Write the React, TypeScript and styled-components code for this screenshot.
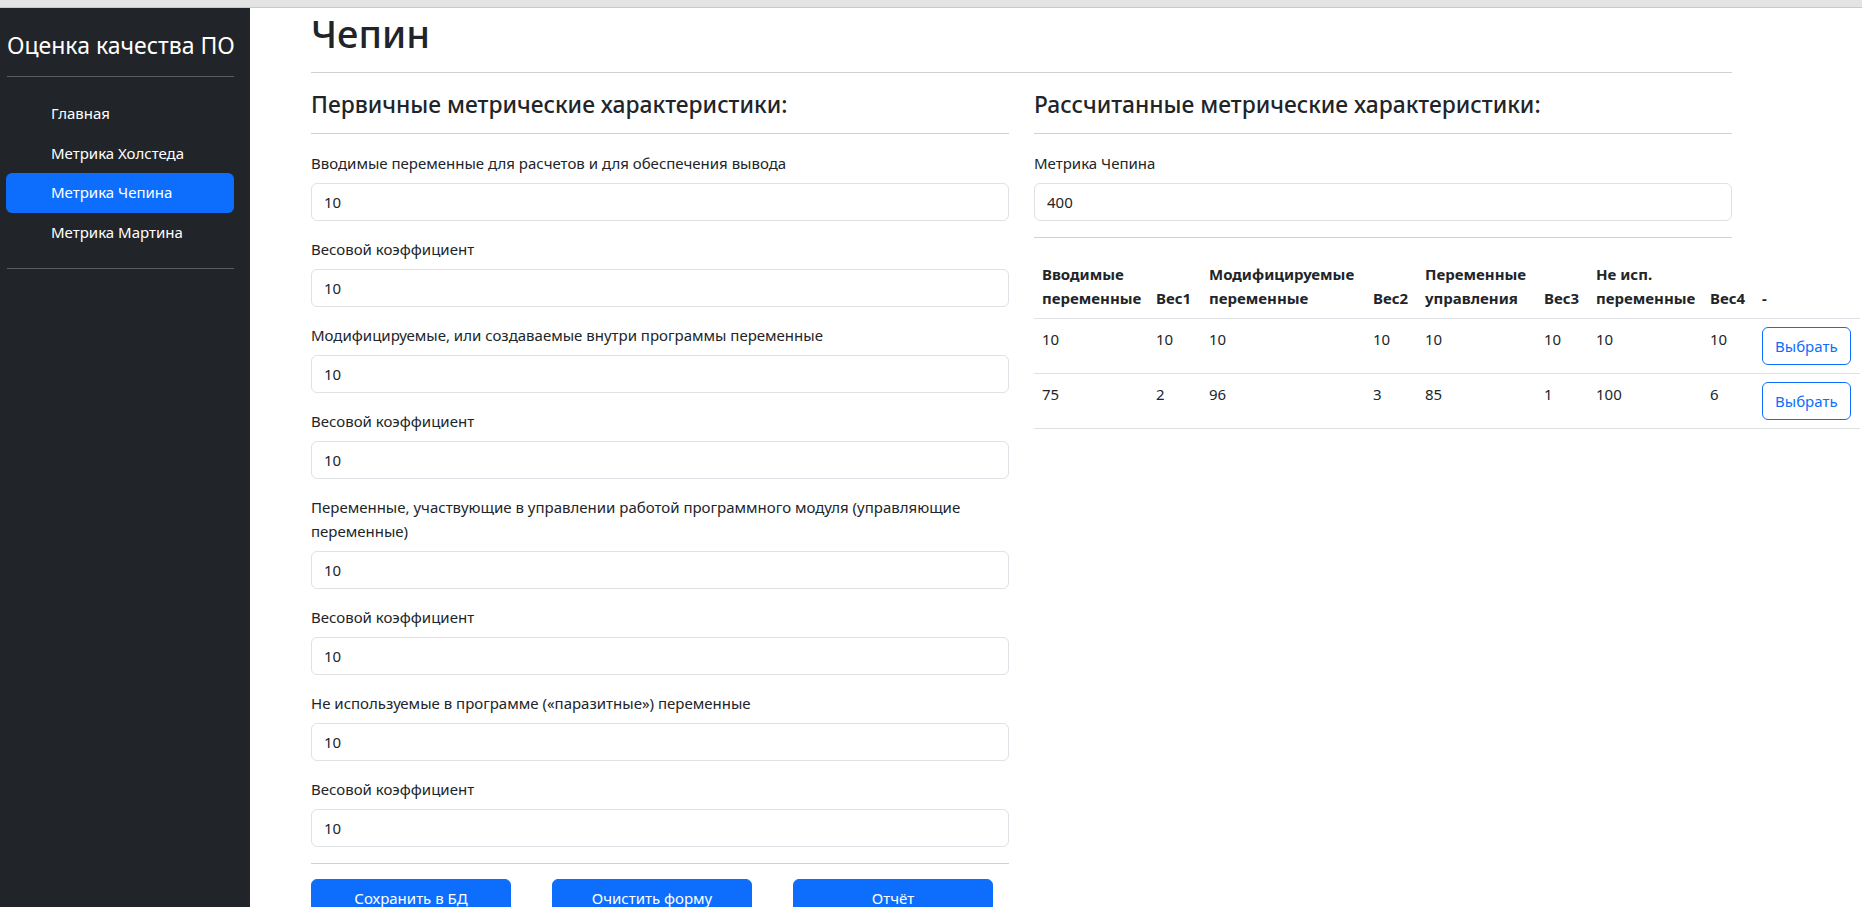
import React from "react";
import styled, { createGlobalStyle } from "styled-components";

const FONT = `"Noto Sans", "Open Sans", "Liberation Sans", sans-serif`;

const GlobalStyle = createGlobalStyle`
  html, body {
    margin: 0;
    padding: 0;
    overflow: hidden;
    background: #ffffff;
  }
  body {
    font-family: ${FONT};
    font-size: 15px;
    line-height: 24px;
    color: #212529;
  }
  * { box-sizing: border-box; }
`;

const Page = styled.div`
  width: 1862px;
  height: 907px;
  overflow: hidden;
  display: flex;
  flex-direction: column;
`;

const TopStrip = styled.div`
  height: 8px;
  flex: none;
  background: #e4e4e4;
  border-bottom: 1px solid #c9c9c9;
`;

const Body = styled.div`
  flex: 1;
  display: flex;
  min-height: 0;
`;

const Sidebar = styled.aside`
  width: 250px;
  flex: none;
  background: #212529;
  color: #ffffff;
  padding: 19px 16px 0 6px;
  display: flex;
  flex-direction: column;
`;

const Brand = styled.div`
  font-size: 23px;
  line-height: 36px;
  padding-left: 1px;
  white-space: nowrap;
`;

const SideRule = styled.div<{ $top: number; $bottom: number }>`
  height: 1px;
  background: #5a5d61;
  margin: ${(p) => p.$top}px 0 ${(p) => p.$bottom}px 1px;
`;

const NavList = styled.nav`
  display: flex;
  flex-direction: column;
`;

const NavLink = styled.a<{ $active?: boolean }>`
  display: block;
  height: 39.5px;
  line-height: 39.5px;
  padding-left: 45px;
  font-size: 15px;
  color: #ffffff;
  text-decoration: none;
  border-radius: 6px;
  background: ${(p) => (p.$active ? "#0d6efd" : "transparent")};
`;

const Main = styled.main`
  flex: 1;
  padding-left: 61px;
  min-width: 0;
`;

const Content = styled.div`
  width: 1421px;
`;

const Title = styled.h1`
  margin: 1px 0 0;
  font-size: 38px;
  line-height: 48px;
  font-weight: 500;
  color: #212529;
`;

const Rule = styled.div<{ $top: number; $bottom: number }>`
  height: 1px;
  background: #cfd2d4;
  width: 100%;
  margin: ${(p) => p.$top}px 0 ${(p) => p.$bottom}px;
`;

const Columns = styled.div`
  display: grid;
  grid-template-columns: 698px 698px;
  column-gap: 25px;
`;

const Column = styled.section`
  display: flex;
  flex-direction: column;
  min-width: 0;
`;

const SectionTitle = styled.h3`
  margin: 17px 0 0;
  font-size: 22.8px;
  line-height: 29px;
  font-weight: 500;
  color: #212529;
  white-space: nowrap;
`;

const Field = styled.div`
  display: flex;
  flex-direction: column;
  margin-bottom: 16px;
`;

const Label = styled.label`
  font-size: 15px;
  line-height: 24px;
  margin-bottom: 8px;
  color: #212529;
`;

const Input = styled.input`
  height: 38px;
  width: 100%;
  padding: 6px 12px;
  font-family: ${FONT};
  font-size: 15px;
  line-height: 24px;
  color: #212529;
  background: #ffffff;
  border: 1px solid #dee2e6;
  border-radius: 6px;
  outline: none;
`;

const ButtonRow = styled.div`
  display: flex;
  gap: 41px;
`;

const PrimaryButton = styled.button`
  width: 200px;
  height: 38px;
  flex: none;
  font-family: ${FONT};
  font-size: 15px;
  line-height: 24px;
  color: #ffffff;
  background: #0d6efd;
  border: 1px solid #0d6efd;
  border-radius: 6px;
  padding: 6px 12px;
`;

const Table = styled.table`
  border-collapse: collapse;
  table-layout: fixed;
  width: 826px;
  margin-top: 16px;
  vertical-align: top;
`;

const Th = styled.th<{ $w: number }>`
  width: ${(p) => p.$w}px;
  padding: 8px;
  text-align: left;
  vertical-align: bottom;
  font-weight: 700;
  font-size: 15px;
  line-height: 24px;
  color: #212529;
  border-bottom: 1px solid #dee2e6;
`;

const Td = styled.td`
  padding: 8px;
  vertical-align: top;
  font-size: 15px;
  line-height: 24px;
  color: #212529;
  border-bottom: 1px solid #dee2e6;
`;

const OutlineButton = styled.button`
  height: 38px;
  padding: 6px 12px;
  font-family: ${FONT};
  font-size: 15px;
  line-height: 24px;
  color: #0d6efd;
  background: #ffffff;
  border: 1px solid #0d6efd;
  border-radius: 6px;
  white-space: nowrap;
`;

const fields = [
  { label: "Вводимые переменные для расчетов и для обеспечения вывода", value: "10" },
  { label: "Весовой коэффициент", value: "10" },
  { label: "Модифицируемые, или создаваемые внутри программы переменные", value: "10" },
  { label: "Весовой коэффициент", value: "10" },
  {
    label:
      "Переменные, участвующие в управлении работой программного модуля (управляющие переменные)",
    value: "10",
  },
  { label: "Весовой коэффициент", value: "10" },
  { label: "Не используемые в программе («паразитные») переменные", value: "10" },
  { label: "Весовой коэффициент", value: "10" },
];

const headers: { text: string; w: number }[] = [
  { text: "Вводимые переменные", w: 114 },
  { text: "Вес1", w: 53 },
  { text: "Модифицируемые переменные", w: 164 },
  { text: "Вес2", w: 52 },
  { text: "Переменные управления", w: 119 },
  { text: "Вес3", w: 52 },
  { text: "Не исп. переменные", w: 114 },
  { text: "Вес4", w: 52 },
  { text: "-", w: 106 },
];

const rows = [
  ["10", "10", "10", "10", "10", "10", "10", "10"],
  ["75", "2", "96", "3", "85", "1", "100", "6"],
];

const navItems = ["Главная", "Метрика Холстеда", "Метрика Чепина", "Метрика Мартина"];

export default function App() {
  return (
    <Page>
      <GlobalStyle />
      <TopStrip />
      <Body>
        <Sidebar>
          <Brand>Оценка качества ПО</Brand>
          <SideRule $top={13} $bottom={17} />
          <NavList>
            {navItems.map((item) => (
              <NavLink key={item} href="#" $active={item === "Метрика Чепина"}>
                {item}
              </NavLink>
            ))}
          </NavList>
          <SideRule $top={16} $bottom={0} />
        </Sidebar>
        <Main>
          <Content>
            <Title>Чепин</Title>
            <Rule $top={15} $bottom={0} />
            <Columns>
              <Column>
                <SectionTitle>Первичные метрические характеристики:</SectionTitle>
                <Rule $top={14} $bottom={17} />
                {fields.map((f, i) => (
                  <Field key={i}>
                    <Label>{f.label}</Label>
                    <Input defaultValue={f.value} />
                  </Field>
                ))}
                <Rule $top={0} $bottom={15} />
                <ButtonRow>
                  <PrimaryButton>Сохранить в БД</PrimaryButton>
                  <PrimaryButton>Очистить форму</PrimaryButton>
                  <PrimaryButton>Отчёт</PrimaryButton>
                </ButtonRow>
              </Column>
              <Column>
                <SectionTitle>Рассчитанные метрические характеристики:</SectionTitle>
                <Rule $top={14} $bottom={17} />
                <Field>
                  <Label>Метрика Чепина</Label>
                  <Input defaultValue="400" />
                </Field>
                <Rule $top={0} $bottom={0} />
                <Table>
                  <thead>
                    <tr>
                      {headers.map((h) => (
                        <Th key={h.text} $w={h.w}>
                          {h.text}
                        </Th>
                      ))}
                    </tr>
                  </thead>
                  <tbody>
                    {rows.map((r, i) => (
                      <tr key={i}>
                        {r.map((c, j) => (
                          <Td key={j}>{c}</Td>
                        ))}
                        <Td>
                          <OutlineButton>Выбрать</OutlineButton>
                        </Td>
                      </tr>
                    ))}
                  </tbody>
                </Table>
              </Column>
            </Columns>
          </Content>
        </Main>
      </Body>
    </Page>
  );
}
